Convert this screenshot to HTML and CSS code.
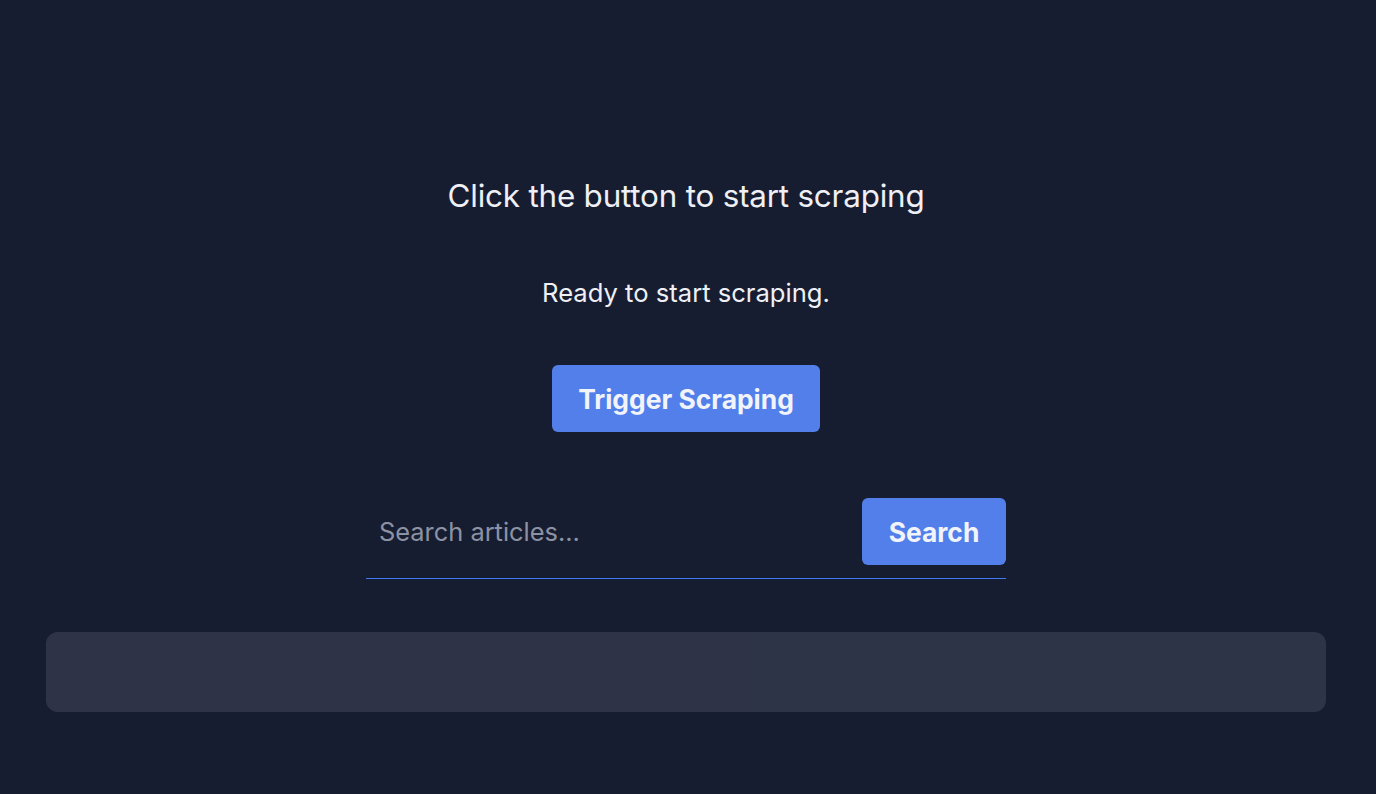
FILE: index.html
```html
<!DOCTYPE html>
<html lang="en">
<head>
<meta charset="utf-8">
<title>Scraper</title>
<link rel="stylesheet" href="styles.css">
</head>
<body>
<main class="app">
  <h1 class="title">Click the button to start scraping</h1>
  <p class="status">Ready to start scraping.</p>
  <button class="btn btn-trigger">Trigger Scraping</button>
  <form class="search">
    <input class="search-input" type="text" placeholder="Search articles...">
    <button class="btn btn-search" type="button">Search</button>
  </form>
  <section class="results"></section>
</main>
</body>
</html>
```

FILE: styles.css
```css
* { box-sizing: border-box; }
html, body { margin: 0; height: 100%; }
body {
  background: #171d30;
  font-family: Inter, "Noto Sans", sans-serif;
  color: #eef0f6;
}
.app {
  display: flex;
  flex-direction: column;
  align-items: center;
  padding: 177px 50px 0 46px;
}
.title {
  margin: 0;
  font-size: 31.4px;
  font-weight: 400;
  line-height: 38px;
  letter-spacing: -0.2px;
}
.status {
  margin: 63px 0 0;
  font-size: 25.6px;
  line-height: 30px;
}
.btn {
  border: none;
  border-radius: 6px;
  background: #537fea;
  color: #f2f4fb;
  font-family: inherit;
  font-weight: 700;
  font-size: 26.4px;
  cursor: pointer;
}
.btn-trigger {
  margin-top: 57px;
  width: 268px;
  height: 67px;
}
.search {
  margin-top: 66px;
  width: 640px;
  display: flex;
  align-items: center;
  padding-bottom: 13px;
  border-bottom: 1px solid #3f78f2;
}
.search-input {
  flex: 1;
  height: 67px;
  background: transparent;
  border: none;
  outline: none;
  padding: 0 13px;
  font-family: inherit;
  font-size: 25.4px;
  color: #eef0f6;
}
.search-input::placeholder { color: #8c92a3; }
.btn-search {
  width: 144px;
  height: 67px;
}
.results {
  margin-top: 53px;
  width: 100%;
  height: 80px;
  border-radius: 12px;
  background: linear-gradient(90deg, #2f3347, #2d3447);
}
```
